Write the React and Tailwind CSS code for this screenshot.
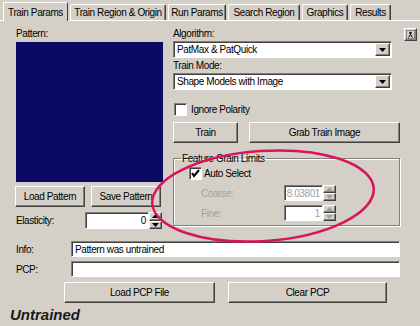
import React from "react";

const raised = "bg-[#d4d0c8] border-t border-l border-white border-r border-b border-r-[#404040] border-b-[#404040] shadow-[inset_-1px_-1px_0_#808080]";
const sunken = "bg-white border-t border-l border-[#808080] border-r border-b border-r-white border-b-white shadow-[inset_1px_1px_0_#404040]";

function Btn({ w, children, className = "" }) {
    return (
        <div className={`${raised} h-[21px] flex items-center justify-center ${w} ${className}`}>
            {children}
        </div>
    );
}

function Arrow({ up }) {
    return (
        <svg width="7" height="4" viewBox="0 0 7 4">
            <polygon points={up ? "3.5,0 7,4 0,4" : "0,0 7,0 3.5,4"} fill="currentColor" />
        </svg>
    );
}

function Select({ value }) {
    return (
        <div className={`${sunken} h-[17px] w-[219px] flex items-center pl-[3px] pr-[1px]`}>
            <span className="flex-1 leading-none">{value}</span>
            <div className={`${raised} w-[15px] h-[13px] flex items-center justify-center`}>
                <svg width="7" height="4" viewBox="0 0 7 4">
                    <polygon points="0,0 7,0 3.5,4" fill="#000" />
                </svg>
            </div>
        </div>
    );
}

function Spin({ w, h, value, disabled }) {
    const color = disabled ? "text-[#a0a0a0]" : "text-black";
    return (
        <div className="flex">
            <div className={`${sunken} ${w} ${h} flex items-center justify-end pr-[2px] ${color}`}>{value}</div>
            <div className={`flex flex-col w-[13px] ${h} ${color}`}>
                <div className={`${raised} flex-1 flex items-center justify-center`}><Arrow up /></div>
                <div className={`${raised} flex-1 flex items-center justify-center`}><Arrow /></div>
            </div>
        </div>
    );
}

function Check({ checked }) {
    return (
        <div className={`${sunken} w-[13px] h-[13px] flex items-center justify-center`}>
            {checked && (
                <svg width="9" height="9" viewBox="0 0 9 9">
                    <polyline points="1,4 3,7 8,1" fill="none" stroke="#000" strokeWidth="2" />
                </svg>
            )}
        </div>
    );
}

function Tab({ w, active, children }) {
    if (active) {
        return (
            <div className={`${w} h-[19px] -mb-px relative z-10 bg-[#d4d0c8] border-t border-l border-white border-r border-r-[#404040] rounded-t-[2px] flex items-center justify-center`}>
                {children}
            </div>
        );
    }
    return (
        <div className={`${w} h-[16px] bg-[#d4d0c8] border-t border-l border-white border-r border-r-[#404040] shadow-[inset_-1px_0_0_#808080] rounded-t-[2px] flex items-center justify-center`}>
            {children}
        </div>
    );
}

export default function App() {
    return (
        <div className="w-[420px] h-[326px] bg-[#d4d0c8] relative overflow-hidden whitespace-nowrap text-[10px] tracking-[-0.4px] leading-[13px] text-black font-['Liberation_Sans',Arial,sans-serif]">
            {/* tabs */}
            <div className="flex items-end gap-[2px] pl-[3px] pt-[2px] h-[20px]">
                <Tab w="w-[65px]" active>Train Params</Tab>
                <Tab w="w-[96px]">Train Region &amp; Origin</Tab>
                <Tab w="w-[58px]">Run Params</Tab>
                <Tab w="w-[72px]">Search Region</Tab>
                <Tab w="w-[46px]">Graphics</Tab>
                <Tab w="w-[41px]">Results</Tab>
            </div>

            {/* panel */}
            <div className="border-t border-white pt-[6px] pl-[16px]">
                <div className="flex items-start">
                    {/* left column */}
                    <div className="w-[147px] flex flex-col">
                        <div className="h-[13px]">Pattern:</div>
                        <div className="mt-[2px] h-[140px] bg-[#0a0a62]" />
                        <div className="mt-[4px] flex -ml-px">
                            <Btn w="w-[70px]">Load Pattern</Btn>
                            <Btn w="w-[70px]" className="ml-[6px]">Save Pattern</Btn>
                        </div>
                        <div className="mt-[5px] flex items-center h-[17px]">
                            <span className="flex-1">Elasticity:</span>
                            <Spin w="w-[64px]" h="h-[17px]" value="0" />
                            <div className="w-px" />
                        </div>
                    </div>

                    {/* right column */}
                    <div className="ml-[10px] w-[227px] flex flex-col">
                        <div className="h-[13px]">Algorithm:</div>
                        <div className="mt-[1px]"><Select value="PatMax & PatQuick" /></div>
                        <div className="mt-[1px] h-[13px]">Train Mode:</div>
                        <div className="mt-[1px]"><Select value="Shape Models with Image" /></div>
                        <div className="mt-[13px] flex items-center h-[13px] pl-px">
                            <Check />
                            <span className="ml-[4px]">Ignore Polarity</span>
                        </div>
                        <div className="mt-[6px] flex">
                            <Btn w="w-[65px]">Train</Btn>
                            <Btn w="w-[151px]" className="ml-[11px]">Grab Train Image</Btn>
                        </div>
                        <fieldset className="mt-[9px] w-[227px] border border-[#808080] shadow-[1px_1px_0_#fff,inset_1px_1px_0_#fff] pl-[15px] pb-[4px]">
                            <legend className="-ml-[8px] px-[1px] h-[13px]">Feature Grain Limits</legend>
                            <div className="mt-[2px] flex items-center h-[13px]">
                                <Check checked />
                                <span className="ml-[2px]">Auto Select</span>
                            </div>
                            <div className="mt-[5px] flex items-center h-[16px]">
                                <span className="ml-[12px] w-[83px] text-[#a0a0a0]">Coarse:</span>
                                <Spin w="w-[39px]" h="h-[16px]" value="8.03801" disabled />
                            </div>
                            <div className="mt-[4px] flex items-center h-[16px]">
                                <span className="ml-[12px] w-[83px] text-[#a0a0a0]">Fine:</span>
                                <Spin w="w-[39px]" h="h-[16px]" value="1" disabled />
                            </div>
                        </fieldset>
                    </div>

                    {/* small corner button */}
                    <div className={`${raised} ml-[4px] mt-[1px] w-[13px] h-[13px] flex items-center justify-center`}>
                        <svg width="9" height="9" viewBox="0 0 9 9">
                            <rect x="0.5" y="0.5" width="8" height="8" fill="none" stroke="#404040" strokeDasharray="1 1" />
                            <circle cx="4.5" cy="3" r="1.2" fill="#000" />
                            <path d="M2.5 7.5 L4.5 4.5 L6.5 7.5" fill="none" stroke="#000" />
                        </svg>
                    </div>
                </div>

                {/* info rows */}
                <div className="mt-[12px] flex items-center">
                    <span className="w-[55px]">Info:</span>
                    <div className={`${sunken} w-[329px] h-[16px] flex items-center pl-[3px]`}>Pattern was untrained</div>
                </div>
                <div className="mt-[4px] flex items-center">
                    <span className="w-[55px]">PCP:</span>
                    <div className={`${sunken} w-[329px] h-[16px]`} />
                </div>
                <div className="mt-[5px] flex">
                    <Btn w="w-[151px]" className="ml-[48px]">Load PCP File</Btn>
                    <Btn w="w-[159px]" className="ml-[13px]">Clear PCP</Btn>
                </div>
                <div className="-ml-[6px] mt-[3px] text-[15px] tracking-normal leading-[17px] font-bold italic text-[#1a1a1a]">
                    Untrained
                </div>
            </div>

            {/* hand-drawn annotation */}
            <svg className="absolute left-0 top-0 pointer-events-none" width="420" height="326" viewBox="0 0 420 326">
                <ellipse cx="263" cy="196" rx="111" ry="45" transform="rotate(-4 263 196)" fill="none" stroke="#d8145a" strokeWidth="2.5" />
            </svg>
        </div>
    );
}
